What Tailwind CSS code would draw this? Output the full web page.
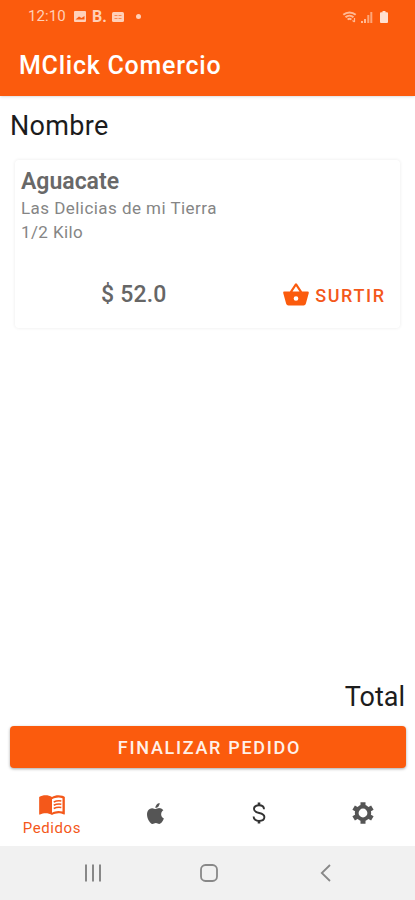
<!DOCTYPE html>
<html lang="es">

<head>
    <meta charset="UTF-8">
    <meta name="viewport" content="width=device-width, initial-scale=1.0">
    <title>MClick Comercio</title>
    <script src="https://cdn.jsdelivr.net/npm/@tailwindcss/browser@4"></script>
</head>

<body class="h-screen flex flex-col overflow-hidden bg-white font-['Roboto',sans-serif]">
    <!-- #region Header -->
    <header class="h-24 shrink-0 bg-[#fb5b0d] text-white shadow-sm">
        <div class="h-[33px] flex items-center justify-between pl-7 pr-[27px] text-[#ffd0b8]">
            <div class="flex items-center h-full">
                <span class="text-[15px] leading-none w-[38px] tracking-[0.1px]">12:10</span>
                <svg class="ml-2 w-3 h-[11px]" viewBox="0 0 12 11" fill="currentColor">
                    <path fill-rule="evenodd" d="M1 0h10a1 1 0 0 1 1 1v9a1 1 0 0 1-1 1H1a1 1 0 0 1-1-1V1a1 1 0 0 1 1-1zM1.500 8.500h9V5L7.500 7 5 5.500z"></path>
                </svg>
                <span class="ml-[6px] text-[16px] font-bold leading-none w-[14px]">B.</span>
                <svg class="ml-[6px] w-3 h-[10px]" viewBox="0 0 12 10">
                    <rect width="12" height="10" rx="1.500" fill="currentColor"></rect>
                    <path d="M2.500 3.500h3M6.500 3.500h3M2.500 6.500h3M6.500 6.500h3" stroke="#fb8850" stroke-width="1"></path>
                </svg>
                <span class="ml-[12px] size-[5px] rounded-full bg-current"></span>
            </div>
            <div class="flex items-center h-full text-[#ffb994]">
                <svg class="w-[15px] h-3" viewBox="0 0 14 12" fill="none" stroke="currentColor" stroke-width="2">
                    <path d="M.8 3.800c3.500-3.200 8.900-3.200 12.400 0M3 6.300c2.300-2.200 5.700-2.200 8 0M5.200 8.600c1-1 2.600-1 3.600 0"></path>
                    <path d="M12 7v4M10 9.500l2 1.500" stroke-width="1.200"></path>
                </svg>
                <svg class="ml-1 w-3 h-3" viewBox="0 0 12 12" fill="currentColor">
                    <path d="M0 10h2v2H0zM3 8h2v4H3z"></path>
                    <path d="M6.300 4h2v8h-2zM9.300 1h2v11h-2z" opacity=".8"></path>
                </svg>
                <svg class="ml-[7px] w-2 h-3 text-[#ffe0d0]" viewBox="0 0 8 12" fill="currentColor">
                    <path d="M2.500 0h3v1.200H7a1 1 0 0 1 1 1V11a1 1 0 0 1-1 1H1a1 1 0 0 1-1-1V2.200a1 1 0 0 1 1-1h1.500z"></path>
                </svg>
            </div>
        </div>
        <h1 class="pl-[19px] pt-[17px] text-[25px] leading-8 font-medium tracking-[0.75px]">MClick Comercio</h1>
    </header>
    <!-- #endregion Header -->

    <!-- #region Order -->
    <main class="flex-1 flex flex-col px-[10px]">
        <h2 class="mt-[14px] text-[27px] leading-8 text-[#1c1c1c] tracking-[0.3px]">Nombre</h2>

        <section class="mt-[18px] ml-[5px] mr-[5px] h-[168px] flex flex-col rounded-sm bg-white pl-[7px] pr-4 pt-2 pb-[19px] text-[#858585] shadow-[0_0_3px_1px_rgba(0,0,0,0.05)]">
            <h3 class="-ml-px text-[23px] leading-7 font-semibold text-[#686868]">Aguacate</h3>
            <p class="-ml-px text-[17px] leading-6 tracking-[0.45px]">Las Delicias de mi Tierra</p>
            <p class="-ml-px text-[17px] leading-6 tracking-[0.4px]">1/2 Kilo</p>
            <div class="mt-auto flex items-center justify-between pl-[79px]">
                <span class="text-[23px] leading-7 font-medium text-[#666] tracking-[0.2px]">$ 52.0</span>
                <button class="flex items-center text-[#f4581a]">
                    <svg class="size-7 text-[#fb5b0d]" viewBox="0 0 24 24" fill="currentColor">
                        <path d="M17.210 9l-4.380-6.560a1 1 0 0 0-1.660.010L6.790 9H2a1 1 0 0 0-.960 1.270l2.540 9.270A2 2 0 0 0 5.500 21h13a2 2 0 0 0 1.930-1.460l2.540-9.270L23 10a1 1 0 0 0-1-1h-4.790zM9 9l3-4.400L15 9H9zm3 8a2 2 0 1 1 0-4 2 2 0 0 1 0 4z"></path>
                    </svg>
                    <span class="relative top-px ml-[5px] text-[18px] leading-7 font-medium tracking-[1.6px] -mr-[1.6px]">SURTIR</span>
                </button>
            </div>
        </section>

        <p class="mt-auto mb-[13px] text-right text-[27px] leading-8 text-[#1c1c1c]">Total</p>
        <button class="h-[42px] mb-3 -mr-px rounded-[4px] bg-[#fb5b0d] text-[#fff0e8] text-[18px] font-medium tracking-[1.7px] pl-[3px] shadow-[0_1px_3px_rgba(0,0,0,0.35)]">FINALIZAR PEDIDO</button>
    </main>
    <!-- #endregion Order -->

    <!-- #region Tabs -->
    <nav class="h-[66px] shrink-0 grid grid-cols-4 text-[#555]">
        <div class="flex flex-col items-center pt-[10px] text-[#f4581a]">
            <svg class="size-7" viewBox="0 0 24 24" fill="currentColor">
                <path d="M21 5c-1.11-.35-2.33-.5-3.5-.5-1.95 0-4.05.4-5.5 1.5-1.45-1.1-3.55-1.5-5.5-1.5S2.45 4.9 1 6v14.65c0 .25.25.5.5.5.1 0 .15-.05.25-.05C3.1 20.45 5.05 20 6.5 20c1.95 0 4.05.4 5.5 1.5 1.35-.85 3.8-1.5 5.5-1.5 1.65 0 3.35.3 4.75 1.05.1.05.15.05.25.05.25 0 .5-.25.5-.5V6c-.6-.45-1.25-.75-2-1zm0 13.5c-1.1-.35-2.3-.5-3.5-.5-1.7 0-4.15.65-5.5 1.5V8c1.35-.85 3.8-1.5 5.5-1.5 1.2 0 2.4.15 3.5.5v11.5z"></path>
                <path d="M13.5 10.2c2-.9 4.2-1.2 6.5-.8M13.5 13c2-.9 4.2-1.2 6.5-.8M13.5 15.8c2-.9 4.2-1.2 6.5-.8" fill="none" stroke="currentColor" stroke-width="1.4"></path>
            </svg>
            <span class="text-[15px] leading-5 tracking-[0.6px]">Pedidos</span>
        </div>
        <div class="flex items-center justify-center">
            <svg class="size-[25px]" viewBox="0 0 24 24" fill="currentColor">
                <path d="M18.71 19.5C17.88 20.74 17 21.95 15.66 21.97C14.32 22 13.89 21.18 12.37 21.18C10.84 21.18 10.37 21.95 9.1 22C7.79 22.05 6.8 20.68 5.96 19.47C4.25 17 2.94 12.45 4.7 9.39C5.57 7.87 7.13 6.91 8.82 6.88C10.1 6.86 11.32 7.75 12.11 7.75C12.89 7.75 14.37 6.68 15.92 6.84C16.57 6.87 18.39 7.1 19.56 8.82C19.47 8.88 17.39 10.1 17.41 12.63C17.44 15.65 20.06 16.66 20.09 16.67C20.06 16.74 19.67 18.11 18.71 19.5M13 3.5C13.73 2.67 14.94 2.04 15.94 2C16.07 3.17 15.6 4.35 14.9 5.19C14.21 6.04 13.07 6.7 11.95 6.61C11.8 5.46 12.36 4.26 13 3.5Z"></path>
            </svg>
        </div>
        <div class="flex items-center justify-center">
            <svg class="w-[14px] h-[22px] text-[#333]" viewBox="0 0 14 22" fill="none" stroke="currentColor" stroke-width="1.9">
                <path d="M12 7.2C12 4.6 9.8 3.2 7 3.2S2 4.6 2 7c0 5.4 10.4 2.6 10.4 8 0 2.5-2.4 3.9-5.4 3.9S1.6 17.3 1.6 14.6"></path>
                <path d="M7 .5v3M7 18.5v3" stroke-width="2.6"></path>
            </svg>
        </div>
        <div class="flex items-center justify-center">
            <svg class="size-[22px]" viewBox="-11 -11 22 22" fill="none" stroke="currentColor">
                <circle r="6.3" stroke-width="3.8"></circle>
                <g stroke-width="5">
                    <path d="M0-10.800v4M0 6.800v4"></path>
                    <path d="M0-10.800v4M0 6.800v4" transform="rotate(60)"></path>
                    <path d="M0-10.800v4M0 6.800v4" transform="rotate(120)"></path>
                </g>
            </svg>
        </div>
    </nav>
    <!-- #endregion Tabs -->

    <!-- #region System navigation -->
    <footer class="h-[54px] shrink-0 flex items-center bg-[#f1f1f1] pl-[84px] pb-px text-[#888]">
        <svg class="w-[18px] h-[18px]" viewBox="0 0 18 18" fill="none" stroke="currentColor" stroke-width="2">
            <path d="M2 0.5v17M9 0.5v17M16 0.5v17"></path>
        </svg>
        <svg class="ml-[98px] w-[18px] h-[18px]" viewBox="0 0 18 18" fill="none" stroke="currentColor" stroke-width="1.8">
            <rect x="1" y="1" width="16" height="16" rx="4.5"></rect>
        </svg>
        <svg class="ml-[102px] w-[11px] h-[18px]" viewBox="0 0 11 18" fill="none" stroke="currentColor" stroke-width="1.8">
            <path d="M10 1L1.8 9l8.2 8"></path>
        </svg>
    </footer>
    <!-- #endregion System navigation -->
</body>

</html>
